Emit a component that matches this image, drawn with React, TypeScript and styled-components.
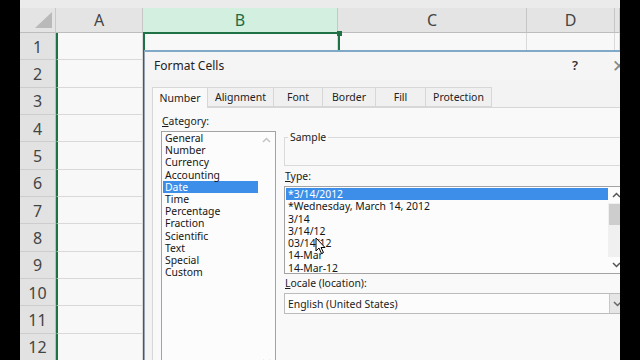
import React from "react";
import styled, { createGlobalStyle, css } from "styled-components";

const GlobalStyle = createGlobalStyle`
  html, body { margin: 0; padding: 0; background: #000; overflow: hidden; }
  * { box-sizing: border-box; }
`;

const UI = `"Noto Sans", "Open Sans", Arial, sans-serif`;

const Screen = styled.div`
  width: 640px;
  height: 360px;
  background: #000;
  display: flex;
  padding: 0 20px;
`;

const Viewport = styled.div`
  flex: 1;
  position: relative;
  overflow: hidden;
  background: #f7f7f7;
`;

const Sheet = styled.div`
  display: grid;
  grid-template-columns: 36px 87px 195px 189px 88px 1fr;
  grid-template-rows: 8px 25px repeat(12, 27.33px);
  font-family: ${UI};
`;

const TopStrip = styled.div`
  grid-column: 1 / -1;
  background: #ebebeb;
`;

const Corner = styled.div`
  background: #e4e4e4;
  border-right: 1px solid #c9c9c9;
  border-bottom: 1px solid #bdbdbd;
  display: flex;
  align-items: flex-end;
  justify-content: flex-end;
  padding: 0 3px 4px 0;
`;

const ColHeader = styled.div<{ $selected?: boolean }>`
  background: ${(p) => (p.$selected ? "#d2efdf" : "#e4e4e4")};
  color: ${(p) => (p.$selected ? "#1f6b45" : "#444")};
  border-right: 1px solid #c6c6c6;
  border-bottom: 1px solid #bdbdbd;
  display: flex;
  align-items: center;
  justify-content: center;
  font-size: 16px;
  line-height: 1;
`;

const RowHeader = styled.div`
  background: #e2e2e2;
  color: #444;
  border-right: 1px solid #bdbdbd;
  border-bottom: 1px solid #cdcdcd;
  display: flex;
  align-items: center;
  justify-content: center;
  font-size: 16px;
  padding-top: 1px;
`;

const Cell = styled.div<{ $greenLeft?: boolean }>`
  background: #f8f8f8;
  border-right: 1px solid #d9d9d9;
  border-bottom: 1px solid #d9d9d9;
  ${(p) =>
    p.$greenLeft &&
    css`
      border-left: 2px solid #1f7246;
    `}
`;

const Selection = styled.div`
  position: absolute;
  left: 123px;
  top: 32px;
  width: 197px;
  height: 400px;
  border: 2px solid #1f7246;
  pointer-events: none;
`;

const Handle = styled.div`
  position: absolute;
  right: -4px;
  top: -3px;
  width: 5px;
  height: 5px;
  background: #1f7246;
`;

const Dialog = styled.div`
  position: absolute;
  left: 124px;
  top: 50px;
  width: 498px;
  height: 330px;
  background: #f3f3f3;
  border: 1px solid #97a3b0;
  border-top: 2px solid #7fa9c6;
  font-family: ${UI};
  color: #1a1a1a;
  display: flex;
  flex-direction: column;
`;

const TitleBar = styled.div`
  height: 28px;
  display: flex;
  align-items: center;
  padding-left: 9px;
  font-size: 12px;
  background: #f5f5f5;
`;

const Title = styled.div`
  flex: 1;
  color: #222;
  padding-bottom: 2px;
`;

const TitleButton = styled.div<{ $light?: boolean }>`
  width: 44px;
  text-align: center;
  font-size: ${(p) => (p.$light ? "17px" : "13px")};
  color: ${(p) => (p.$light ? "#888" : "#333")};
  font-weight: ${(p) => (p.$light ? 300 : 600)};
  padding-bottom: 2px;
`;

const Body = styled.div`
  padding: 7px 0 0 7px;
  flex: 1;
  display: flex;
  flex-direction: column;
`;

const Tabs = styled.div`
  display: flex;
  height: 20px;
  align-items: flex-end;
  position: relative;
  z-index: 1;
`;

const Tab = styled.div<{ $w: number; $active?: boolean }>`
  width: ${(p) => p.$w}px;
  height: ${(p) => (p.$active ? 21 : 20)}px;
  margin-bottom: ${(p) => (p.$active ? -1 : 0)}px;
  background: ${(p) => (p.$active ? "#f9f9f9" : "#f0f0f0")};
  border: 1px solid #d7d7d7;
  border-bottom: ${(p) => (p.$active ? "none" : "1px solid #d7d7d7")};
  margin-right: -1px;
  display: flex;
  align-items: center;
  justify-content: center;
  font-size: 10.5px;
  color: #222;
  padding-bottom: ${(p) => (p.$active ? 1 : 0)}px;
`;

const Panel = styled.div`
  flex: 1;
  background: #f9f9f9;
  border: 1px solid #d7d7d7;
  display: flex;
  gap: 8px;
  padding: 3px 0 0 8px;
`;

const LeftCol = styled.div`
  width: 115px;
  display: flex;
  flex-direction: column;
`;

const RightCol = styled.div`
  width: 342px;
  display: flex;
  flex-direction: column;
  padding-top: 20px;
`;

const Label = styled.div<{ $h?: number }>`
  font-size: 10.4px;
  line-height: ${(p) => p.$h ?? 20}px;
  height: ${(p) => p.$h ?? 20}px;
  color: #1a1a1a;
  padding-left: 1px;
  u { text-decoration: underline; text-underline-offset: 1px; }
`;

const ListBox = styled.div<{ $h: number }>`
  height: ${(p) => p.$h}px;
  background: #fcfcfc;
  border: 1px solid #a3a3a3;
  display: flex;
  font-size: 10.4px;
`;

const Items = styled.div<{ $pad?: number }>`
  flex: 1;
  padding-top: ${(p) => p.$pad ?? 0}px;
  min-width: 0;
`;

const Item = styled.div<{ $selected?: boolean; $h: number }>`
  height: ${(p) => p.$h}px;
  line-height: ${(p) => p.$h}px;
  white-space: nowrap;
  padding-left: 2px;
  margin-left: 1px;
  background: ${(p) => (p.$selected ? "#3d8ee8" : "transparent")};
  color: ${(p) => (p.$selected ? "#fff" : "#151515")};
`;

const ScrollBar = styled.div`
  width: 17px;
  display: flex;
  flex-direction: column;
  align-items: stretch;
`;

const ScrollArrow = styled.div<{ $dim?: boolean }>`
  height: 16px;
  display: flex;
  align-items: center;
  justify-content: center;
  color: ${(p) => (p.$dim ? "#c4c4c4" : "#555")};
`;

const Track = styled.div<{ $plain?: boolean }>`
  flex: 1;
  background: ${(p) => (p.$plain ? "transparent" : "#f0f0f0")};
  display: flex;
  flex-direction: column;
`;

const Thumb = styled.div`
  height: 21px;
  margin: 1px 1px 0 1px;
  background: #cdcdcd;
`;

const GroupBox = styled.fieldset`
  margin: 0;
  padding: 0;
  height: 35px;
  border: 1px solid #dadada;
  legend {
    font-size: 10.4px;
    line-height: 12px;
    padding: 0 2px;
    margin-left: 3px;
    color: #1a1a1a;
  }
`;

const Select = styled.div`
  height: 21px;
  border: 1px solid #bcbcbc;
  background: #fcfcfc;
  display: flex;
  align-items: center;
  font-size: 10.4px;
  padding-left: 3px;
`;

const SelectText = styled.div`
  flex: 1;
`;

const SelectButton = styled.div`
  width: 16px;
  height: 100%;
  background: #e6e6e6;
  border-left: 1px solid #c8c8c8;
  display: flex;
  align-items: center;
  justify-content: center;
  color: #666;
`;

const Cursor = styled.svg`
  position: absolute;
  left: 295px;
  top: 237px;
`;

const Chevron = ({ up }: { up?: boolean }) => (
  <svg width="9" height="6" viewBox="0 0 9 6">
    <path
      d={up ? "M1 5 L4.5 1.5 L8 5" : "M1 1 L4.5 4.5 L8 1"}
      fill="none"
      stroke="currentColor"
      strokeWidth="1.5"
    />
  </svg>
);

const cols = ["A", "B", "C", "D", ""];
const categories = [
  "General",
  "Number",
  "Currency",
  "Accounting",
  "Date",
  "Time",
  "Percentage",
  "Fraction",
  "Scientific",
  "Text",
  "Special",
  "Custom",
];
const types = [
  "*3/14/2012",
  "*Wednesday, March 14, 2012",
  "3/14",
  "3/14/12",
  "03/14/12",
  "14-Mar",
  "14-Mar-12",
];
const tabs: [string, number][] = [
  ["Number", 56],
  ["Alignment", 67],
  ["Font", 50],
  ["Border", 54],
  ["Fill", 51],
  ["Protection", 67],
];

export default function App() {
  return (
    <>
      <GlobalStyle />
      <Screen>
        <Viewport>
          <Sheet>
            <TopStrip />
            <Corner>
              <svg width="17" height="16" viewBox="0 0 17 16">
                <polygon points="17,0 17,16 0,16" fill="#b9b9b9" />
              </svg>
            </Corner>
            {cols.map((c, i) => (
              <ColHeader key={i} $selected={c === "B"}>
                {c}
              </ColHeader>
            ))}
            {Array.from({ length: 12 }).map((_, r) => (
              <React.Fragment key={r}>
                <RowHeader>{r + 1}</RowHeader>
                {cols.map((c, i) => (
                  <Cell key={i} $greenLeft={c === "A"} />
                ))}
              </React.Fragment>
            ))}
          </Sheet>
          <Selection>
            <Handle />
          </Selection>
          <Dialog>
            <TitleBar>
              <Title>Format Cells</Title>
              <TitleButton>?</TitleButton>
              <TitleButton $light>✕</TitleButton>
            </TitleBar>
            <Body>
              <Tabs>
                {tabs.map(([t, w]) => (
                  <Tab key={t} $w={w} $active={t === "Number"}>
                    {t}
                  </Tab>
                ))}
              </Tabs>
              <Panel>
                <LeftCol>
                  <Label>
                    <u>C</u>ategory:
                  </Label>
                  <ListBox $h={240}>
                    <Items>
                      {categories.map((c) => (
                        <Item key={c} $h={12.2} $selected={c === "Date"}>
                          {c}
                        </Item>
                      ))}
                    </Items>
                    <ScrollBar>
                      <ScrollArrow $dim>
                        <Chevron up />
                      </ScrollArrow>
                      <Track $plain />
                      <ScrollArrow $dim>
                        <Chevron />
                      </ScrollArrow>
                    </ScrollBar>
                  </ListBox>
                </LeftCol>
                <RightCol>
                  <GroupBox>
                    <legend>Sample</legend>
                  </GroupBox>
                  <Label>
                    <u>T</u>ype:
                  </Label>
                  <ListBox $h={88}>
                    <Items $pad={1}>
                      {types.map((t, i) => (
                        <Item key={t} $h={12.3} $selected={i === 0}>
                          {t}
                        </Item>
                      ))}
                    </Items>
                    <ScrollBar>
                      <ScrollArrow>
                        <Chevron up />
                      </ScrollArrow>
                      <Track>
                        <Thumb />
                      </Track>
                      <ScrollArrow>
                        <Chevron />
                      </ScrollArrow>
                    </ScrollBar>
                  </ListBox>
                  <Label $h={19}>
                    <u>L</u>ocale (location):
                  </Label>
                  <Select>
                    <SelectText>English (United States)</SelectText>
                    <SelectButton>
                      <Chevron />
                    </SelectButton>
                  </Select>
                </RightCol>
              </Panel>
            </Body>
          </Dialog>
          <Cursor width="12" height="18" viewBox="0 0 12 18">
            <path
              d="M1 1 L1 14 L4 11 L6.5 16.5 L8.5 15.5 L6 10.5 L10 10.5 Z"
              fill="#fff"
              stroke="#000"
              strokeWidth="1"
              strokeLinejoin="round"
            />
          </Cursor>
        </Viewport>
      </Screen>
    </>
  );
}
